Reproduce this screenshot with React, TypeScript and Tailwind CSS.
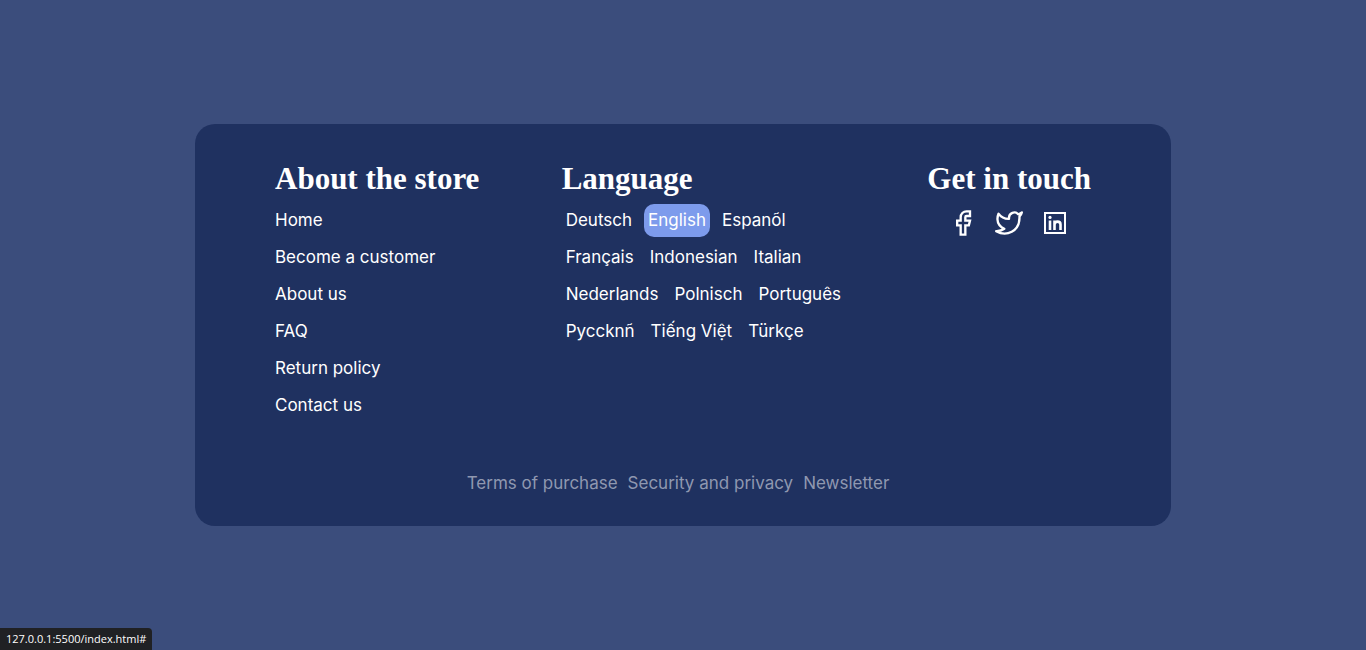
const about = ['Home', 'Become a customer', 'About us', 'FAQ', 'Return policy', 'Contact us'];
const languages = [
  ['Deutsch', 'English', 'Espanõl'],
  ['Français', 'Indonesian', 'Italian'],
  ['Nederlands', 'Polnisch', 'Português'],
  ['Pyccknñ', 'Tiếng Việt', 'Türkçe'],
];
const legal = ['Terms of purchase', 'Security and privacy', 'Newsletter'];

const heading = "font-['Liberation_Serif',serif] text-[31px] leading-[32px] font-bold whitespace-nowrap";
const langLink = 'block rounded-[10px] px-1 py-[5px] leading-[23px]';

function Facebook() {
  return (
    <svg className="size-7" viewBox="0 0 24 24" fill="none" stroke="currentColor" strokeWidth="2" aria-hidden="true">
      <path d="M18 2h-3a5 5 0 0 0-5 5v3H7v4h3v8h4v-8h3l1-4h-4V7a1 1 0 0 1 1-1h3z" />
    </svg>
  );
}

function Twitter() {
  return (
    <svg className="size-7" viewBox="0 0 24 24" fill="none" stroke="currentColor" strokeWidth="2" strokeLinejoin="round" aria-hidden="true">
      <path d="M23 3a10.9 10.9 0 0 1-3.14 1.53 4.48 4.48 0 0 0-7.86 3v1A10.66 10.66 0 0 1 3 4s-4 9 5 13a11.64 11.64 0 0 1-7 2c9 5 20 0 20-11.5a4.5 4.5 0 0 0-.08-.83A7.72 7.72 0 0 0 23 3z" />
    </svg>
  );
}

function LinkedIn() {
  return (
    <svg className="size-7" viewBox="0 0 28 28" fill="none" stroke="currentColor" aria-hidden="true">
      <path strokeWidth="2" d="M4 4h20v20H4z" />
      <path strokeWidth="2.6" d="M9 11.5V21M13.5 11.5V21M13.5 15.5c0-3.8 6-3.8 6 0V21" />
      <circle cx="9" cy="8.4" r="1.6" fill="currentColor" stroke="none" />
    </svg>
  );
}

const social = [
  { name: 'Facebook', Icon: Facebook },
  { name: 'Twitter', Icon: Twitter },
  { name: 'LinkedIn', Icon: LinkedIn },
];

export default function App() {
  return (
    <div className="relative flex min-h-screen items-center justify-center bg-[#3b4d7c] font-['Inter',sans-serif] text-[17px] text-white">
      <footer className="w-full max-w-[976px] rounded-[20px] bg-[#1f3160] px-20 pt-[39px] pb-[30px]">
        <div className="flex flex-wrap justify-between gap-y-8">
          <section>
            <h2 className={heading}>About the store</h2>
            <ul className="mt-[9px] flex flex-col gap-1">
              {about.map((t) => (
                <li key={t}><a href="#" className="block py-[5px] leading-[23px]">{t}</a></li>
              ))}
            </ul>
          </section>
          <section>
            <h2 className={heading}>Language</h2>
            <div className="mt-[9px] flex flex-col gap-1">
              {languages.map((row) => (
                <ul key={row[0]} className="flex gap-2">
                  {row.map((t) => (
                    <li key={t}>
                      <a href="#" className={t === 'English' ? `${langLink} bg-[#7d9bec]` : langLink}>{t}</a>
                    </li>
                  ))}
                </ul>
              ))}
            </div>
          </section>
          <section>
            <h2 className={heading}>Get in touch</h2>
            <ul className="mt-[14px] flex justify-center gap-[18px]">
              {social.map(({ name, Icon }) => (
                <li key={name}><a href="#" aria-label={name} className="block"><Icon /></a></li>
              ))}
            </ul>
          </section>
        </div>
        <ul className="mt-12 flex flex-wrap justify-center leading-[26px] text-[#8f98b0]">
          {legal.map((t) => (
            <li key={t} className="mr-2.5"><a href="#">{t}</a></li>
          ))}
        </ul>
      </footer>
      <div className="absolute bottom-0 left-0 rounded-tr-[4px] bg-[#202124] px-[6px] pb-px font-['Open_Sans',sans-serif] text-[11px] leading-[21px]">
        127.0.0.1:5500/index.html#
      </div>
    </div>
  );
}
